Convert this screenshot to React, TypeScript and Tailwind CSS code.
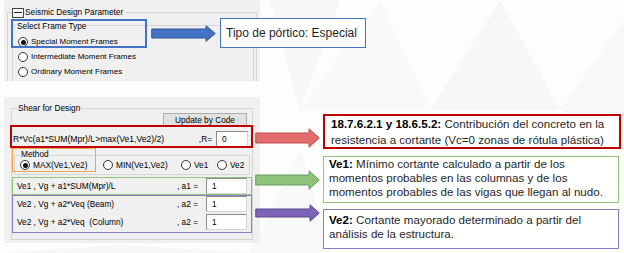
import React from 'react';

const dlg = "font-['Liberation_Sans',Arial,sans-serif] text-[8.3px] text-black leading-none";

type RadioProps = { checked?: boolean; label: string; className?: string };

function Radio({ checked = false, label, className = '' }: RadioProps) {
  return (
    <div className={`flex items-center gap-[3px] ${className}`}>
      <span className="flex items-center justify-center w-[10px] h-[10px] rounded-full border border-[#333] bg-white shrink-0">
        {checked && <span className="w-[5px] h-[5px] rounded-full bg-[#111]" />}
      </span>
      <span className="whitespace-nowrap">{label}</span>
    </div>
  );
}

function Field({ value, className = '' }: { value: string; className?: string }) {
  return (
    <div
      className={`h-[16px] bg-white border border-[#8a8a8a] border-r-[#d4d4d4] border-b-[#d4d4d4] flex items-center pl-[5px] ${className}`}
    >
      {value}
    </div>
  );
}

type ArrowProps = { w: number; h: number; head: number; fill: string; stroke: string };

function Arrow({ w, h, head, fill, stroke }: ArrowProps) {
  const bt = Math.round(h * 0.25);
  const bb = h - bt;
  const hs = w - head;
  return (
    <svg width={w} height={h} viewBox={`0 0 ${w} ${h}`} className="block">
      <polygon
        points={`0.75,${bt} ${hs},${bt} ${hs},0.75 ${w - 0.75},${h / 2} ${hs},${h - 0.75} ${hs},${bb} 0.75,${bb}`}
        fill={fill}
        stroke={stroke}
        strokeWidth="1"
      />
    </svg>
  );
}

function Backdrop() {
  return (
    <svg className="absolute inset-0" width="624" height="253" viewBox="0 0 624 253">
      <rect width="624" height="253" fill="#fdfdfd" />
      <polygon points="270,0 340,0 300,110" fill="#f4f4f4" opacity="0.7" />
      <polygon points="300,110 380,0 430,110" fill="#f7f7f7" opacity="0.8" />
      <polygon points="430,110 500,0 560,110" fill="#f3f3f3" opacity="0.6" />
      <polygon points="560,110 624,20 624,140" fill="#f6f6f6" opacity="0.8" />
      <polygon points="250,253 300,150 330,253" fill="#f5f5f5" opacity="0.7" />
      <polygon points="0,253 120,245 260,253" fill="#f7f7f7" />
    </svg>
  );
}

// one explicit line of the annotation notes, as wrapped in the picture
function Line({ label, text }: { label?: string; text: string }) {
  return (
    <div className="whitespace-nowrap">
      {label && <b className="text-black">{label} </b>}
      <span>{text}</span>
    </div>
  );
}

export default function App() {
  return (
    <div className="relative w-[624px] h-[253px] overflow-hidden bg-white font-['Liberation_Sans',Arial,sans-serif]">
      <Backdrop />
      <div className="relative flex flex-col pl-[4px]">
        {/* Seismic design parameter */}
        <div className="flex items-start">
          <div className={`relative shrink-0 w-[256px] h-[81px] bg-[#f0f0f0] pt-[12px] px-[3px] ${dlg}`}>
            <div className="h-[69px] border border-b-0 border-[#d5d5d5]">
              <div className="-mt-[6px] ml-[4px] flex items-center gap-[1px] w-fit pr-[3px] h-[11px] bg-[#f0f0f0]">
                <span className="flex items-center justify-center w-[12px] h-[10px] border border-[#444] bg-[#f8f8f8]">
                  <span className="w-[8px] h-px bg-[#222]" />
                </span>
                <span>Seismic Design Parameter</span>
              </div>
              <div className="mt-[7px] ml-[4px] mr-[2px] h-[56px] border border-b-0 border-[#d5d5d5]">
                <div className="-mt-[5.5px] ml-[3px] w-fit px-[1px] h-[11px] flex items-center bg-[#f0f0f0]">
                  Select Frame Type
                </div>
                <div className="mt-[3px] ml-[5px] flex flex-col text-[8px]">
                  <Radio className="h-[15px]" checked label="Special Moment Frames" />
                  <Radio className="h-[15px]" label="Intermediate Moment Frames" />
                  <Radio className="h-[15px]" label="Ordinary Moment Frames" />
                </div>
              </div>
            </div>
            <div className="absolute left-[7px] top-[19px] w-[136px] h-[29px] border-2 border-[#4472c4]" />
          </div>

          <div className="relative z-10 -ml-[109px] flex items-start gap-[4px]">
            <div className="mt-[25px]">
              <Arrow w={65} h={17} head={10} fill="#4472c4" stroke="#2f528f" />
            </div>
            <div className="mt-[18px] w-[146px] h-[30px] bg-white border-[1.5px] border-[#4472c4] flex items-center pl-[5px] text-[12px] text-[#1f1f1f] whitespace-nowrap">
              Tipo de pórtico: Especial
            </div>
          </div>
        </div>

        {/* Shear for design */}
        <div className="flex items-start mt-[16px]">
          <div className={`relative shrink-0 w-[256px] h-[146px] bg-[#f0f0f0] pt-[11px] px-[7px] ${dlg}`}>
            <div className="h-[132px] border border-[#d5d5d5] flex flex-col">
              <div className="-mt-[6px] ml-[5px] w-fit px-[1px] h-[11px] flex items-center bg-[#f0f0f0]">
                Shear for Design
              </div>
              <div className="-mt-[1px] self-end mr-[5px] w-[84px] h-[13px] flex items-center justify-center bg-[#e1e1e1] border border-[#adadad] border-b-0">
                Update by Code
              </div>
              <div className="h-[22px] pt-[4px] pl-[1px] mr-[4px] flex items-center">
                <span className="flex-1 whitespace-nowrap text-[8.6px]">R*Vc(a1*SUM(Mpr)/L&gt;max(Ve1,Ve2)/2)</span>
                <span className="mr-[4px]">,R=</span>
                <Field value="0" className="w-[32px]" />
              </div>

              <div className="mt-[7px] ml-[2px] mr-[2px] h-[20px] border border-[#d5d5d5]">
                <div className="-mt-[7.5px] ml-[5px] w-fit px-[1px] h-[11px] flex items-center bg-[#f0f0f0]">
                  Method
                </div>
                <div className="h-[11px] pl-[5px] flex items-center">
                  <Radio className="w-[83px]" checked label="MAX(Ve1,Ve2)" />
                  <Radio className="w-[78px]" label="MIN(Ve1,Ve2)" />
                  <Radio className="w-[36px]" label="Ve1" />
                  <Radio label="Ve2" />
                </div>
              </div>

              <div className="mt-[2px] h-[18px] pl-[5px] mr-[5px] flex items-center">
                <span className="flex-1 whitespace-nowrap">Ve1 , Vg + a1*SUM(Mpr)/L</span>
                <span className="mr-[8px]">, a1 =</span>
                <Field value="1" className="w-[41px] h-[15px]" />
              </div>
              <div className="h-[18px] pl-[5px] mr-[5px] flex items-center">
                <span className="flex-1 whitespace-nowrap">Ve2 , Vg + a2*Veq (Beam)</span>
                <span className="mr-[8px]">, a2 =</span>
                <Field value="1" className="w-[41px]" />
              </div>
              <div className="h-[18px] pl-[5px] mr-[5px] flex items-center">
                <span className="flex-1 whitespace-pre">Ve2 , Vg + a2*Veq  (Column)</span>
                <span className="mr-[8px]">, a2 =</span>
                <Field value="1" className="w-[41px]" />
              </div>
            </div>

            <div className="absolute left-[6px] top-[28px] w-[243px] h-[23px] border-2 border-[#c00000]" />
            <div className="absolute left-[8px] top-[51px] w-[84px] h-[24px] border-[1.5px] border-[#f4a250]" />
            <div className="absolute left-[8px] top-[80px] w-[240px] h-[18px] border-[1.5px] border-[#93c47d]" />
            <div className="absolute left-[8px] top-[98px] w-[240px] h-[38px] border-[1.5px] border-[#8e7cc3]" />
          </div>

          <div className="relative z-10 -ml-[5px] w-[65px] shrink-0 flex flex-col">
            <div className="mt-[31px]">
              <Arrow w={65} h={20} head={11} fill="#e46c6c" stroke="#b9504d" />
            </div>
            <div className="mt-[22px]">
              <Arrow w={65} h={20} head={11} fill="#8fc27a" stroke="#6b9a58" />
            </div>
            <div className="mt-[14px]">
              <Arrow w={65} h={18} head={10} fill="#7e63b8" stroke="#5d4891" />
            </div>
          </div>

          <div className="ml-[3px] flex flex-col text-[11.6px] text-[#1f1f1f]">
            <div className="mt-[17px] w-[298px] h-[35px] bg-white border-2 border-[#c00000] pl-[6px] leading-[16px]">
              <Line label="18.7.6.2.1 y 18.6.5.2:" text="Contribución del concreto en la" />
              <Line text="resistencia a cortante (Vc=0 zonas de rótula plástica)" />
            </div>
            <div className="mt-[7px] w-[296px] h-[47px] bg-white border-[1.5px] border-[#93c47d] pl-[5px] leading-[14px]">
              <Line label="Ve1:" text="Mínimo cortante calculado a partir de los" />
              <Line text="momentos probables en las columnas y de los" />
              <Line text="momentos probables de las vigas que llegan al nudo." />
            </div>
            <div className="mt-[6px] w-[296px] h-[40px] bg-white border-[1.5px] border-[#8e7cc3] pl-[5px] pt-[3px] leading-[14px]">
              <Line label="Ve2:" text="Cortante mayorado determinado a partir del" />
              <Line text="análisis de la estructura." />
            </div>
          </div>
        </div>
      </div>
    </div>
  );
}
